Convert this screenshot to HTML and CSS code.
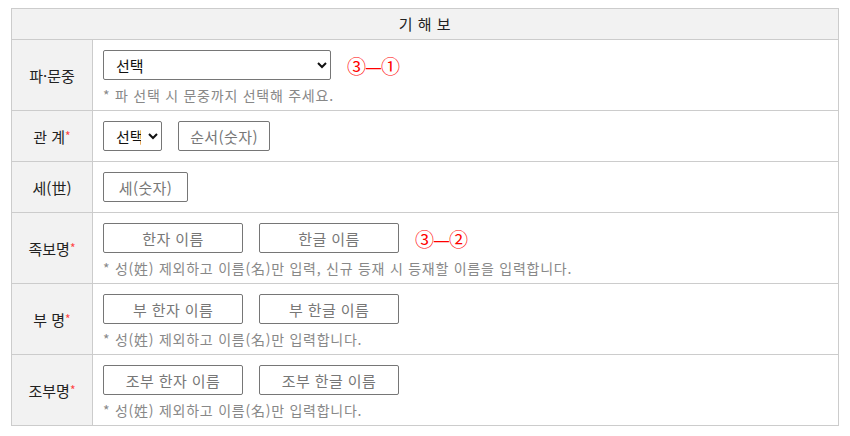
FILE: index.html
```html
<!DOCTYPE html>
<html lang="ko">
<head>
  <meta charset="UTF-8">
  <title>기해보</title>
  <link rel="stylesheet" href="styles.css">
</head>
<body>

<table class="form-table">
  <thead>
    <tr>
      <th colspan="2" class="title">기 해 보</th>
    </tr>
  </thead>
  <tbody>
    <tr class="with-note">
      <th>파·문중</th>
      <td>
        <div class="line">
          <select class="sel-wide"><option>선택</option></select>
          <span class="mark">③—①</span>
        </div>
        <p class="note">* 파 선택 시 문중까지 선택해 주세요.</p>
      </td>
    </tr>
    <tr>
      <th>관 계<span class="req">*</span></th>
      <td>
        <div class="line">
          <select class="sel-small"><option>선택</option></select>
          <input type="text" class="inp-order" placeholder="순서(숫자)">
        </div>
      </td>
    </tr>
    <tr>
      <th>세(世)</th>
      <td>
        <div class="line">
          <input type="text" class="inp-gen" placeholder="세(숫자)">
        </div>
      </td>
    </tr>
    <tr class="with-note">
      <th>족보명<span class="req">*</span></th>
      <td>
        <div class="line">
          <input type="text" class="inp-name" placeholder="한자 이름">
          <input type="text" class="inp-name" placeholder="한글 이름">
          <span class="mark">③—②</span>
        </div>
        <p class="note">* 성(姓) 제외하고 이름(名)만 입력, 신규 등재 시 등재할 이름을 입력합니다.</p>
      </td>
    </tr>
    <tr class="with-note">
      <th>부 명<span class="req">*</span></th>
      <td>
        <div class="line">
          <input type="text" class="inp-name" placeholder="부 한자 이름">
          <input type="text" class="inp-name" placeholder="부 한글 이름">
        </div>
        <p class="note">* 성(姓) 제외하고 이름(名)만 입력합니다.</p>
      </td>
    </tr>
    <tr class="with-note">
      <th>조부명<span class="req">*</span></th>
      <td>
        <div class="line">
          <input type="text" class="inp-name" placeholder="조부 한자 이름">
          <input type="text" class="inp-name" placeholder="조부 한글 이름">
        </div>
        <p class="note">* 성(姓) 제외하고 이름(名)만 입력합니다.</p>
      </td>
    </tr>
  </tbody>
</table>

</body>
</html>
```

FILE: styles.css
```css
body {
  margin: 8px 11px;
  font-family: "Noto Sans CJK KR", "Noto Sans", sans-serif;
  font-size: 15px;
  color: #222;
  background: #fff;
}

.form-table {
  width: 828px;
  border-collapse: collapse;
  border: 1px solid #ccc;
}

.form-table th,
.form-table td {
  border: 1px solid #ccc;
}

.form-table .title {
  height: 30px;
  padding: 0;
  background: #f2f2f2;
  font-weight: normal;
  text-align: center;
  line-height: 30px;
  letter-spacing: 0.5px;
}

.form-table tbody th {
  width: 80px;
  padding: 0;
  background: #f2f2f2;
  font-weight: normal;
  text-align: center;
}

.form-table td {
  padding: 10px 10px;
  height: 30px;
}

.with-note td {
  padding-bottom: 6px;
  height: 54px;
}

.line {
  display: flex;
  align-items: center;
  gap: 16px;
  height: 30px;
}

.req {
  color: #f44;
  font-size: 12px;
  vertical-align: 2px;
}

select,
input[type="text"] {
  box-sizing: border-box;
  height: 30px;
  margin: 0;
  font-family: inherit;
  font-size: 15px;
  border: 1px solid #767676;
  border-radius: 2px;
  background: #fff;
  color: #111;
}

select {
  padding: 0 4px 0 8px;
}

input[type="text"] {
  padding: 0 6px;
  text-align: center;
  letter-spacing: 0.4px;
}

input::placeholder {
  color: #777;
}

.sel-wide { width: 228px; }
.sel-small { width: 59px; }
.inp-order { width: 92px; }
.inp-gen { width: 85px; }
.inp-name { width: 140px; }

.mark {
  color: #f00;
  font-size: 19px;
  letter-spacing: -1px;
}

.note {
  margin: 6px 0 0;
  font-size: 14px;
  letter-spacing: 0.75px;
  line-height: 18px;
  color: #888;
}
```
